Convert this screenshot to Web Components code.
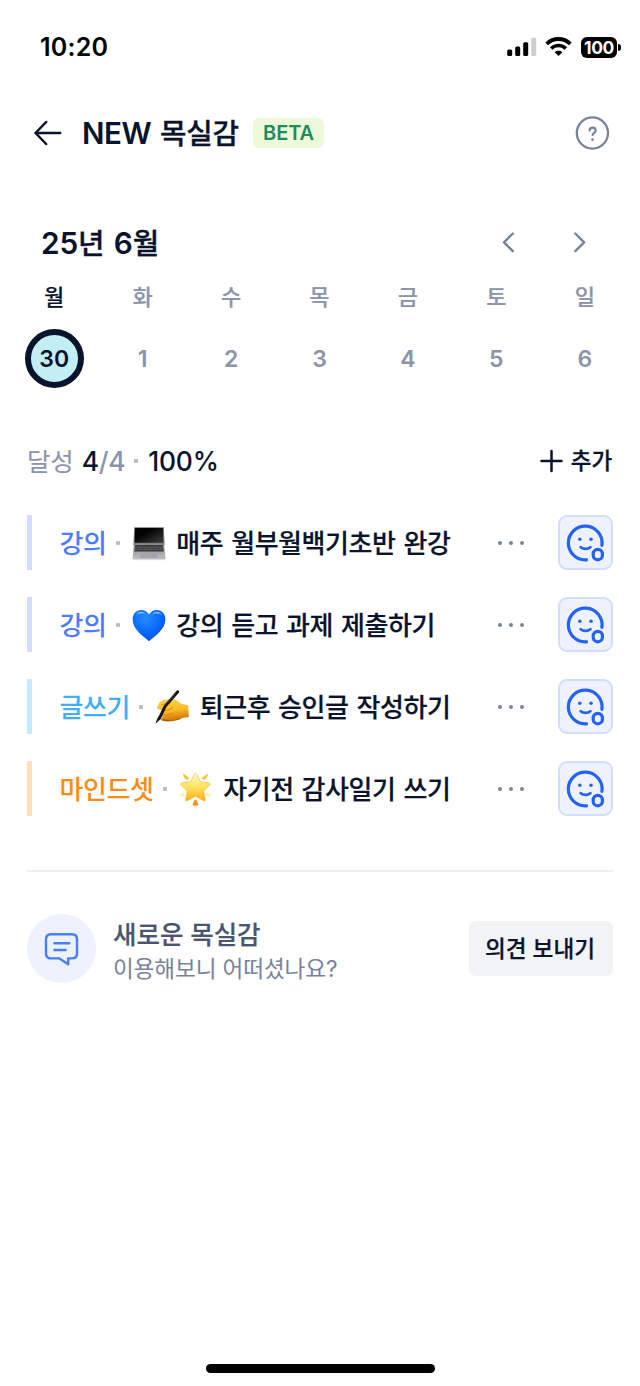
<!DOCTYPE html>
<html lang="ko">
<head>
<meta charset="utf-8">
<title>목실감</title>
<style>
html,body{margin:0;background:#fff}
body{font-family:Inter,"Noto Sans CJK KR",sans-serif;color:#0a132c}
</style>
</head>
<body>
<goal-app></goal-app>
<script>
function define(name, css, html){
  customElements.define(name, class extends HTMLElement{
    connectedCallback(){
      if(this.shadowRoot) return;
      const root=this.attachShadow({mode:'open'});
      const data=this.dataset;
      root.innerHTML='<style>'+css+'</style>'+(typeof html==='function'?html(data):html);
    }
  });
}

define('status-bar', `
:host{display:flex;height:94px;box-sizing:border-box;padding:0 19.5px 0 40px;align-items:center;justify-content:space-between;color:#000}
.time{font-size:25px;font-weight:600;line-height:30px;letter-spacing:.2px}
.right{display:flex;align-items:center}
.bars{margin-right:8px}.wifi{margin-right:9px}
.bat{width:36px;height:21px;border-radius:6px;background:#000;color:#fff;font-size:17.5px;font-weight:700;line-height:21px;text-align:center;letter-spacing:-.4px}
.nub{margin-left:1px;width:2.5px;height:7px;border-radius:0 3px 3px 0;background:#000}
svg{display:block}
`, `<span class="time">10:20</span>
<div class="right">
<svg class="bars" width="30" height="20" viewBox="0 0 30 20"><rect x=".2" y="12.500" width="5" height="6.500" rx="1.5"/><rect x="8.2" y="9.500" width="5" height="9.500" rx="1.5"/><rect x="16.2" y="5.200" width="5" height="13.800" rx="1.5"/><rect x="24.2" y=".8" width="5" height="18.200" rx="1.5" fill="#cdcdcf"/></svg>
<svg class="wifi" width="27" height="20" viewBox="0 0 27 20" fill="none" stroke="#000"><path d="M1.7 6.800C8.300.4 18.700.4 25.300 6.800" stroke-width="3.8"/><path d="M6.2 11.500c4.100-4 10.500-4 14.600 0" stroke-width="3.6"/><path d="M13.500 18.900 9.700 15.200c2.200-1.900 5.400-1.900 7.600 0z" fill="#000" stroke="none"/></svg>
<div class="bat">100</div><div class="nub"></div></div>`);

define('app-header', `
:host{display:flex;height:78px;box-sizing:border-box;padding:0 30px 0 33px;align-items:center}
svg{display:block;fill:none;stroke-linecap:round;stroke-linejoin:round}
h1{margin:0 0 0 20px;width:157px;font-size:28.8px;font-weight:500;-webkit-text-stroke:.35px;line-height:40px;white-space:nowrap;letter-spacing:-.3px;word-spacing:1.6px}
h1 span{font-size:29.6px;font-weight:600;-webkit-text-stroke:0;letter-spacing:-.5px}
.beta{margin-left:14px;width:71px;height:30px;border-radius:6px;background:#edfada;color:#1f8c5c;font-size:20px;font-weight:600;line-height:30px;text-align:center;letter-spacing:-.1px}
.help{margin-left:auto}
`, `<svg width="29" height="28" viewBox="0 0 29 28" stroke="#0a132c" stroke-width="2.5"><path d="M27.2 14H2.5M13.2 3 2.5 14l10.7 11"/></svg>
<h1><span>NEW</span> 목실감</h1><div class="beta">BETA</div>
<svg class="help" width="35" height="34" viewBox="0 0 35 34" stroke="#788299"><circle cx="17.4" cy="17" r="15.6" stroke-width="2.3"/><path d="M14.6 14.3c.2-1.7 1.4-2.6 3-2.6 1.800 0 3.100 1.100 3.100 2.700 0 2.500-3.100 2.300-3.100 4.600" stroke-width="2.200"/><circle cx="17.500" cy="23.600" r="1.350" fill="#788299" stroke="none"/></svg>`);

define('calendar-day', `
:host{display:flex;flex-direction:column;align-items:center;color:#8b94a8;font-weight:600}
.w{font-size:22px;font-weight:500;-webkit-text-stroke:.2px;line-height:32px;height:32px}
.d{margin-top:16px;width:59px;height:59px;box-sizing:border-box;border-radius:50%;display:flex;align-items:center;justify-content:center;font-size:23px;line-height:28px}
.on{color:#0a132c}
.d.on{border:6.5px solid #0a132c;background:#c2eff5}
`, d=>`<span class="w ${d.on?'on':''}">${d.week}</span><span class="d ${d.on?'on':''}">${d.day}</span>`);

define('week-calendar', `
:host{display:block;padding-top:50px}
.top{display:flex;height:42px;align-items:center;padding:0 48px 0 41px}
h2{margin:0;flex:1;font-size:28.8px;font-weight:500;-webkit-text-stroke:.35px;line-height:40px;letter-spacing:-.1px;word-spacing:1.7px}
h2 span{font-size:29.8px;font-weight:600;-webkit-text-stroke:0}
svg{display:block;fill:none;stroke:#788299;stroke-width:2.4;stroke-linecap:round;stroke-linejoin:round;width:24px;height:24px}
svg+svg{margin-left:47px}
.days{display:grid;grid-template-columns:repeat(7,1fr);margin:17px 11px 0 10px}
`, `<div class="top"><h2><span>25</span>년 <span>6</span>월</h2>
<svg viewBox="0 0 24 24"><path d="M15.800 2.500 7 11.300l8.800 8.800"/></svg><svg viewBox="0 0 24 24"><path d="m7.300 2.500 8.800 8.800-8.800 8.800"/></svg></div>
<div class="days">${['월','화','수','목','금','토','일'].map((w,i)=>`<calendar-day data-week="${w}" data-day="${i||30}" ${i?'':'data-on="1"'}></calendar-day>`).join('')}</div>`);

define('goal-summary', `
:host{display:flex;align-items:center;height:40px;margin:53px 27px 0;font-size:25.5px;line-height:40px;color:#8b94a8}
.n{font-size:26.4px;font-weight:500;margin-left:8px;letter-spacing:-.3px}
b{font-weight:500;color:#0a132c}
.label{letter-spacing:-.1px;padding-top:1px}
i{width:4px;height:4px;background:#b5bac6;border-radius:1px;margin:0 10px 0 9px}
.p{font-size:26.4px;letter-spacing:-.2px}
.add{margin:0 1px 0 auto;display:flex;align-items:center;gap:7px;color:#0a132c;font-size:22.5px;font-weight:500;-webkit-text-stroke:.3px;letter-spacing:-.1px}
svg{display:block}
`, `<span class="label">달성</span><span class="n"><b>4</b>/4</span><i></i><b class="p">100%</b>
<span class="add"><svg width="25" height="26" viewBox="0 0 25 26" fill="none" stroke="#0a132c" stroke-width="2.5" stroke-linecap="round"><path d="M2.500 13h20M12.500 3v20"/></svg>추가</span>`);

const pictures={
laptop:`<defs><linearGradient id="s" x1="0" y1="0" x2="1" y2="1"><stop offset=".35" stop-color="#030303"/><stop offset=".5" stop-color="#111"/><stop offset="1" stop-color="#3e3e3e"/></linearGradient><linearGradient id="k" x2="0" y2="1"><stop stop-color="#858586"/><stop offset="1" stop-color="#c3c3c5"/></linearGradient></defs><path d="M2.2 1.2h29.6l.8 18H1.4z" fill="#77787a"/><path d="M3.1 2h27.8l.5 14.8H2.6z" fill="url(#s)"/><path d="M2 17.5h30l1.5 14.7q0 1.8-1.7 1.8H2.2Q.5 34 .5 32.2z" fill="url(#k)"/><path d="M3.2 19h27.6l.9 6.4H2.3z" fill="#38383a"/><path d="M2.8 21.2h28.4M2.5 23.3h29" stroke="#8b8b8d" stroke-width=".65" stroke-dasharray="1.8 .5"/><path d="M9 27h16l.7 5H8.3z" fill="#a6a6a8"/><path d="M.8 33.7h32.4" stroke="#e2e2e3"/>`,
heart:`<defs><radialGradient id="h" cx=".4" cy=".28" r=".8"><stop stop-color="#278bff"/><stop offset=".55" stop-color="#0869fb"/><stop offset="1" stop-color="#004de1"/></radialGradient><linearGradient id="g" x2="0" y2="1"><stop stop-color="#9bccff"/><stop offset="1" stop-color="#288bff" stop-opacity="0"/></linearGradient></defs><path d="M17 33.2C12.5 28.8.6 22 .6 11.2.6 5.7 4.4 1.9 9.2 1.9c3.6 0 6.3 1.8 7.8 4.7 1.5-2.9 4.2-4.7 7.8-4.7 4.8 0 8.6 3.8 8.6 9.3C33.4 22 21.5 28.8 17 33.2z" fill="url(#h)"/><path d="M3 8.6c1.2-4.8 8-7.4 12.3-.8-4.6-3.2-9-2-12.3.8zM18.7 7.8C23 1.2 29.8 3.8 31 8.600c-3.300-2.800-7.700-4-12.300-.8z" fill="url(#g)"/>`,
writing:`<defs><linearGradient id="y" x2=".2" y2="1"><stop stop-color="#ffd64e"/><stop offset=".6" stop-color="#fcb923"/><stop offset="1" stop-color="#cf790e"/></linearGradient></defs><path d="M3.4 14.5C5 10.5 9 9.5 13.5 9.2l5.2-.3c2.5.4 5.5 3.5 8.2 5.2l6.2 1.1.8 11.8-6.5.9c-4.6 3.1-12.2 3.3-19.5 2.8-1.5-.3-1.5-2.3.2-2.7-2.1-.4-2-2.7-.2-3.3-2.2-1.2-2.1-3.4.3-4.2l-5.5-1.6c-1.2-1.2.1-3 .7-4.4z" fill="url(#y)"/><path d="M6 15.3c3-1.4 6.5-2.1 9.7-2.4M8.2 20.5c3.7-.2 7-.6 9.7-3.2M8 24.7c4 .7 7.8-.1 11-2M8.2 28c4 .8 8.500.2 12-1.300" stroke="#d98b16" fill="none"/><path d="M6 28c4 2.6 13.800 3.300 21-.2-6 4.400-17 4.500-20.500 2.400z" fill="#a4520c" opacity=".75"/><path d="M22.700 1.700 10.100 16.400 4.600 27.800" fill="none" stroke="#171719" stroke-width="2.900" stroke-linecap="round"/><path d="m3.200 26.400-2.400 6.200q-.3 1 .6.3l4.800-4.400z" fill="#171719"/><path d="m20.400 3.400-7.800 9.200" stroke="#555" stroke-width=".7"/>`,
star:`<defs><linearGradient id="t" x2="0" y2="1"><stop stop-color="#fffbd3"/><stop offset=".5" stop-color="#ffe35b"/><stop offset="1" stop-color="#ffac1c"/></linearGradient></defs><g fill="#f9c62f"><path d="M4.200 2.900q0-1.500 1.200-.7l5 4-1.500 1.600q-3.400.1-4.700-4.900zM28.800 2.900q0-1.500-1.200-.7l-5 4 1.500 1.600q3.400.1 4.700-4.900z"/><path d="m1.200 22.200 4.100-1.700.8 3.400-3.500.5q-2.800-.4-1.400-2.200zM31.800 22.200l-4.100-1.700-.8 3.400 3.500.5q2.800-.4 1.400-2.200z" fill="#fff0a6"/><path d="M16.500 27.300q2.600 1.800 2.800 5.200-.1 1.300-1.400 1.300h-2.800q-1.300 0-1.400-1.300.2-3.400 2.800-5.200z" fill="#ef961e"/></g><path d="M15.300 2.300q1.200-2 2.400 0l3.600 7.300 8.900 1.300q2.100.7.7 2.100l-6.300 6 1.800 8.500q.1 2-1.800 1.200l-8.100-4.400-8.100 4.400q-1.900.8-1.800-1.200L8.400 19l-6.300-6q-1.400-1.400.7-2.100l8.900-1.300z" fill="url(#t)" stroke="#f6c244" stroke-width=".8"/>`
};

define('emoji-picture', `:host{display:block;padding-top:1px}svg{display:block;width:34px;height:35px}`, d=>`<svg viewBox="0 0 34 35" aria-hidden="true">${pictures[d.name]}</svg>`);

define('mood-button', `
:host{display:grid;place-content:center;width:55px;height:55px;box-sizing:border-box;border:2px solid #d3defd;border-radius:9px;background:#eef2ff}
svg{display:block;width:55px;height:55px;fill:none;stroke:#2463f6;stroke-linecap:round}
`, `<svg viewBox="0 0 55 55"><path d="M28.500 44.800A16.850 16.850 0 1 1 43.900 30.300" stroke-width="3.200"/><path d="M22.700 32.200c2.700 2.300 7 2.300 9.700 0" stroke-width="2.800"/><circle cx="21.800" cy="24.300" r="1.750" fill="#2463f6" stroke="none"/><circle cx="33" cy="24.300" r="1.750" fill="#2463f6" stroke="none"/><rect x="35.200" y="34.400" width="9.200" height="10.400" rx="4.600" stroke-width="3.200"/></svg>`);

define('goal-row', `
:host{display:flex;align-items:center;height:55px;font-size:26px;font-weight:500;line-height:40px;white-space:nowrap;letter-spacing:-.45px}
.bar{align-self:stretch;width:5px;margin-right:27.5px;background:var(--bar)}
.cat{color:var(--tone);padding-top:2px}
.dot{width:4px;height:4px;border-radius:1px;background:#b7bcc8;margin:0 12px 0 9.3px}
.title{margin-left:10.5px;padding-top:2px;flex:1;font-weight:500;-webkit-text-stroke:.2px;word-spacing:1.5px}
.more{display:flex;gap:7px;margin-right:34.5px}
.more i{width:4px;height:4px;border-radius:50%;background:#7a849b}
`, `<div class="bar"></div><span class="cat"><slot name="category"></slot></span><i class="dot"></i><slot name="picture"></slot><span class="title"><slot></slot></span><span class="more"><i></i><i></i><i></i></span><mood-button></mood-button>`);

define('goal-list', `
:host{display:grid;gap:27px;margin:34px 27px 0}
`, [['강의','laptop','매주 월부월백기초반 완강','#4a7dff','#d2dcfe'],['강의','heart','강의 듣고 과제 제출하기','#4a7dff','#d2dcfe'],['글쓰기','writing','퇴근후 승인글 작성하기','#42aef4','#c3eafe'],['마인드셋','star','자기전 감사일기 쓰기','#fa8c12','#ffdfba']].map(r=>`<goal-row style="--tone:${r[3]};--bar:${r[4]}"><span slot="category">${r[0]}</span><emoji-picture slot="picture" data-name="${r[1]}"></emoji-picture>${r[2]}</goal-row>`).join(''));

define('feedback-card', `
:host{display:flex;align-items:center;height:69px;margin:54px 27px 0;padding-top:42px;border-top:2px solid #edeef0}
.ic{width:69px;height:69px;border-radius:50%;background:#eef2ff;display:grid;place-items:center}
svg{display:block}
.txt{margin-left:17px;padding-top:6px;flex:1;white-space:nowrap}
.a{font-size:25.5px;font-weight:500;-webkit-text-stroke:.2px;line-height:34px;color:#4a5570}
.b{font-size:22.6px;line-height:34px;color:#788299;letter-spacing:-.12px}
button{all:unset;width:144px;height:55px;border-radius:7px;background:#f2f3f5;text-align:center;font-size:22.6px;font-weight:500;-webkit-text-stroke:.25px;line-height:55px;text-indent:-2px}
`, `<div class="ic"><svg width="37" height="37" viewBox="0 0 37 37" fill="none" stroke="#4a7dff" stroke-width="2.4" stroke-linejoin="round" stroke-linecap="round"><path d="M8 4.2h21q5 0 5 5v14.2q0 5-5 5h-3.8v5.8l-8.800-5.800H8q-5 0-5-5V9.200q0-5 5-5zM11.400 13.200h15M11.400 20h11.200"/></svg></div>
<div class="txt"><div class="a">새로운 목실감</div><div class="b">이용해보니 어떠셨나요?</div></div><button>의견 보내기</button>`);

define('goal-app', `
:host{display:flex;flex-direction:column;width:640px;height:1386px;box-sizing:border-box;background:#fff;overflow:hidden}
.home{width:229px;height:9px;border-radius:5px;background:#000;margin:auto 0 13px 206px}
`, `<status-bar></status-bar><app-header></app-header><week-calendar></week-calendar><goal-summary></goal-summary><goal-list></goal-list><feedback-card></feedback-card><div class="home"></div>`);
</script>
</body>
</html>
